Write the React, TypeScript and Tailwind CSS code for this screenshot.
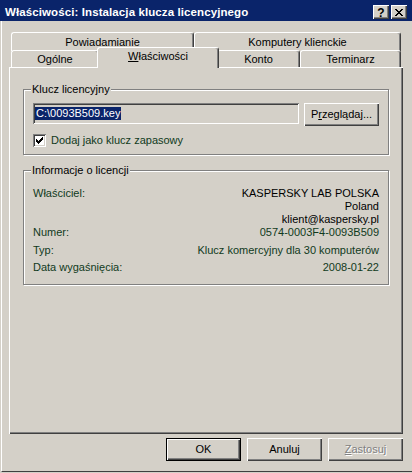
import React from 'react';

function Tab({ label, className, children }: { label?: string; className: string; children?: React.ReactNode }) {
    return (
        <div
            className={`flex items-center justify-center border-l border-t border-r border-l-white border-t-white border-r-[#404040] rounded-t-[3px] shadow-[inset_-1px_0_0_#808080] bg-[#d4d0c8] ${className}`}
        >
            {children ?? label}
        </div>
    );
}

function Button({ className, children }: { className: string; children: React.ReactNode }) {
    return (
        <div
            className={`flex items-center justify-center bg-[#d4d0c8] shadow-[inset_1px_1px_0_#fff,inset_-1px_-1px_0_#404040,inset_-2px_-2px_0_#808080] ${className}`}
        >
            {children}
        </div>
    );
}

function Row({ label, className, children }: { label: string; className: string; children: React.ReactNode }) {
    return (
        <div className={`flex justify-between ${className}`}>
            <div className="text-[#113a1c]">{label}</div>
            <div className="text-right">{children}</div>
        </div>
    );
}

export default function App() {
    return (
        <div className="w-[412px] h-[473px] bg-[#d4d0c8] flex flex-col overflow-hidden text-[11px] leading-[13px] text-black font-['Liberation_Sans',Arial,sans-serif]">
            {/* Title bar */}
            <div className="h-[21px] shrink-0 bg-[#0a246a] flex items-center pt-[3px] pl-[5px] pr-[5px]">
                <span className="font-bold text-white text-[11.5px] tracking-[0.1px]">Właściwości: Instalacja klucza licencyjnego</span>
                <div className="ml-auto flex gap-[2px]">
                    <Button className="w-[16px] h-[14px]">
                        <span className="font-bold text-[12px] leading-[12px] mt-[1px]">?</span>
                    </Button>
                    <Button className="w-[16px] h-[14px]">
                        <svg width="8" height="7" viewBox="0 0 8 7" shapeRendering="crispEdges">
                            <path d="M0 0h2v1h-2zM6 0h2v1h-2zM1 1h2v1h-2zM5 1h2v1h-2zM2 2h4v1h-4zM3 3h2v1h-2zM2 4h4v1h-4zM1 5h2v1h-2zM5 5h2v1h-2zM0 6h2v1h-2zM6 6h2v1h-2z" fill="#000" />
                        </svg>
                    </Button>
                </div>
            </div>

            {/* Body */}
            <div className="flex-1 flex flex-col ml-[1px] border-l border-white border-b border-b-[#404040] mb-[1px] pl-[7px]">
                {/* Tabs */}
                <div className="mt-[11px] ml-[2px] flex h-[18px]">
                    <Tab label="Powiadamianie" className="w-[183px] h-[19px]" />
                    <Tab label="Komputery klienckie" className="w-[207px] h-[19px]" />
                </div>
                <div className="ml-[2px] flex h-[17px] items-start relative z-10">
                    <Tab label="Ogólne" className="w-[88px] h-[17px]" />
                    <Tab className="w-[122px] h-[21px] -mx-[2px] -mt-[3px] relative z-10 border-r-[#404040] pb-[3px]">
                        <span>
                            <span className="underline">W</span>łaściwości
                        </span>
                    </Tab>
                    <Tab label="Konto" className="w-[83px] h-[17px]" />
                    <Tab label="Terminarz" className="w-[101px] h-[17px]" />
                </div>

                {/* Panel */}
                <div className="w-[394px] h-[367px] shrink-0 flex flex-col pl-[14px] pt-[22px] shadow-[inset_1px_1px_0_#fff,inset_-1px_-1px_0_#404040,inset_-2px_-2px_0_#808080]">
                    {/* Klucz licencyjny */}
                    <div className="w-[366px] border border-[#808080] shadow-[inset_1px_1px_0_#fff,1px_1px_0_#fff] flex flex-col px-[9px] pb-[7px]">
                        <div className="-mt-[7px] -ml-[2px] px-[1px] w-fit bg-[#d4d0c8] h-[13px]">Klucz licencyjny</div>
                        <div className="mt-[7px] flex items-start gap-[5px]">
                            <div className="w-[266px] h-[21px] flex items-center pl-[2px] shadow-[inset_1px_1px_0_#808080,inset_-1px_-1px_0_#fff,inset_2px_2px_0_#404040,inset_-2px_-2px_0_#d4d0c8]">
                                <span className="bg-[#0a246a] text-white px-[1px] leading-[13px]">C:\0093B509.key</span>
                            </div>
                            <Button className="w-[75px] h-[23px]">
                                <span>
                                    P<span className="underline">r</span>zeglądaj...
                                </span>
                            </Button>
                        </div>
                        <div className="mt-[8px] flex items-center gap-[5px] h-[13px]">
                            <div className="w-[13px] h-[13px] bg-white flex items-center justify-center shadow-[inset_1px_1px_0_#808080,inset_-1px_-1px_0_#fff,inset_2px_2px_0_#404040,inset_-2px_-2px_0_#d4d0c8]">
                                <svg width="7" height="7" viewBox="0 0 7 7" shapeRendering="crispEdges">
                                    <path d="M6 0h1v3h-1zM5 1h1v3h-1zM4 2h1v3h-1zM3 3h1v3h-1zM2 4h1v3h-1zM1 3h1v3h-1zM0 2h1v3h-1z" fill="#000" />
                                </svg>
                            </div>
                            <span className="text-[#113a1c]">Dodaj jako klucz zapasowy</span>
                        </div>
                    </div>

                    {/* Informacje o licencji */}
                    <div className="mt-[15px] w-[366px] border border-[#808080] shadow-[inset_1px_1px_0_#fff,1px_1px_0_#fff] flex flex-col px-[9px] pb-[10px]">
                        <div className="-mt-[7px] -ml-[2px] px-[1px] w-fit bg-[#d4d0c8] h-[13px]">Informacje o licencji</div>
                        <div className="mt-[10px] flex flex-col">
                            <Row label="Właściciel:" className="">
                                <div className="flex flex-col">
                                    <span>KASPERSKY LAB POLSKA</span>
                                    <span>Poland</span>
                                    <span>klient@kaspersky.pl</span>
                                </div>
                            </Row>
                            <Row label="Numer:" className="">
                                <span className="text-[#113a1c]">0574-0003F4-0093B509</span>
                            </Row>
                            <Row label="Typ:" className="mt-[5px]">
                                <span className="text-[#113a1c]">Klucz komercyjny dla 30 komputerów</span>
                            </Row>
                            <Row label="Data wygaśnięcia:" className="mt-[4px]">
                                <span className="text-[#113a1c]">2008-01-22</span>
                            </Row>
                        </div>
                    </div>
                </div>

                {/* Dialog buttons */}
                <div className="mt-[4px] flex justify-end gap-[6px] pr-[9px]">
                    <div className="w-[75px] h-[23px] border border-black">
                        <Button className="w-full h-full">OK</Button>
                    </div>
                    <Button className="w-[75px] h-[23px]">Anuluj</Button>
                    <Button className="w-[75px] h-[23px]">
                        <span className="text-[#808080] [text-shadow:1px_1px_0_#fff]">
                            <span className="underline">Z</span>astosuj
                        </span>
                    </Button>
                </div>
            </div>
        </div>
    );
}
